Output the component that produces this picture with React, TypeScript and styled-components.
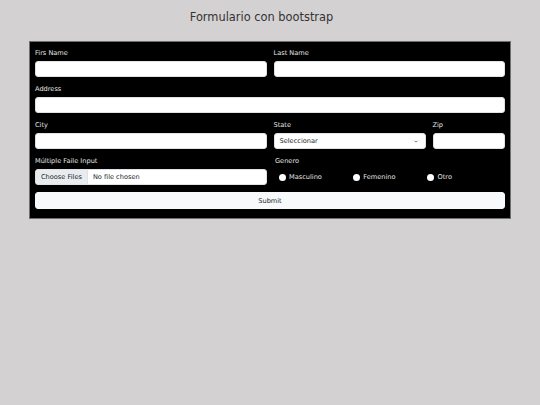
import styled, { createGlobalStyle } from "styled-components";

const GlobalStyle = createGlobalStyle`
    html, body {
        margin: 0;
        padding: 0;
        background-color: #d3d1d2;
        font-family: "DejaVu Sans", "Liberation Sans", sans-serif;
    }
    * {
        box-sizing: border-box;
    }
`;

const StyledPage = styled.div`
    width: 540px;
    height: 405px;
    background-color: #d3d1d2;
`;

const StyledTitle = styled.h1`
    margin: 0;
    height: 41px;
    padding: 9px 17px 0 0;
    font-size: 11.4px;
    line-height: 16px;
    font-weight: normal;
    text-align: center;
    color: #333333;
`;

const StyledForm = styled.form`
    margin: 0 29px;
    padding: 6px 5px 9px 5px;
    background-color: #000000;
    border: 1px solid #6f6f6f;
    display: flex;
    flex-direction: column;
    gap: 7px;
`;

const StyledRow = styled.div`
    display: grid;
    grid-template-columns: repeat(12, 1fr);
    column-gap: 7px;
`;

const StyledField = styled.div<{ $span: number }>`
    grid-column: span ${props => props.$span};
    display: flex;
    flex-direction: column;
    min-width: 0;
`;

const StyledLabel = styled.label<{ $indent?: number }>`
    display: block;
    height: 10px;
    margin-bottom: 3px;
    padding-top: 1px;
    padding-left: ${props => props.$indent ?? 0}px;
    font-size: 6.6px;
    line-height: 9px;
    color: #e6e6e6;
    white-space: nowrap;
`;

const StyledInput = styled.div`
    height: 16px;
    width: 100%;
    background-color: #ffffff;
    border: 1px solid #dee2e6;
    border-radius: 3px;
`;

const StyledSelect = styled(StyledInput)`
    display: flex;
    align-items: center;
    justify-content: space-between;
    padding: 0 7px 0 5px;
    font-size: 6.6px;
    color: #212529;
`;

const StyledFileInput = styled(StyledInput)`
    display: flex;
    align-items: center;
    overflow: hidden;
    font-size: 6.6px;
    color: #212529;
`;

const StyledFileButton = styled.span`
    height: 100%;
    display: flex;
    align-items: center;
    flex-shrink: 0;
    padding: 0 5px;
    background-color: #e9ecef;
    border-right: 1px solid #dee2e6;
    margin-right: 5px;
    white-space: nowrap;
`;

const StyledRadioGroup = styled.div`
    height: 16px;
    display: grid;
    grid-template-columns: repeat(3, 74.3px);
    align-items: center;
    padding-left: 5px;
`;

const StyledRadioItem = styled.div`
    display: flex;
    align-items: center;
    gap: 3.5px;
    font-size: 6.6px;
    color: #e6e6e6;
`;

const StyledRadioDot = styled.span`
    width: 7px;
    height: 7px;
    flex-shrink: 0;
    border-radius: 50%;
    background-color: #ffffff;
`;

const StyledSubmit = styled.button`
    height: 17px;
    width: 100%;
    padding: 0;
    background-color: #f8f9fa;
    border: 1px solid #f8f9fa;
    border-radius: 3px;
    font-family: "DejaVu Sans", "Liberation Sans", sans-serif;
    font-size: 6.6px;
    color: #212529;
`;

const generos = ["Masculino", "Femenino", "Otro"];

export default function App() {
    return (
        <StyledPage>
            <GlobalStyle />
            <StyledTitle>Formulario con bootstrap</StyledTitle>
            <StyledForm onSubmit={e => e.preventDefault()}>
                <StyledRow>
                    <StyledField $span={6}>
                        <StyledLabel>Firs Name</StyledLabel>
                        <StyledInput />
                    </StyledField>
                    <StyledField $span={6}>
                        <StyledLabel>Last Name</StyledLabel>
                        <StyledInput />
                    </StyledField>
                </StyledRow>
                <StyledRow>
                    <StyledField $span={12}>
                        <StyledLabel>Address</StyledLabel>
                        <StyledInput />
                    </StyledField>
                </StyledRow>
                <StyledRow>
                    <StyledField $span={6}>
                        <StyledLabel>City</StyledLabel>
                        <StyledInput />
                    </StyledField>
                    <StyledField $span={4}>
                        <StyledLabel>State</StyledLabel>
                        <StyledSelect>
                            <span>Seleccionar</span>
                            <svg width="4" height="3" viewBox="0 0 4 3">
                                <path d="M0.5 0.7 L2 2.2 L3.5 0.7" fill="none" stroke="#343a40" strokeWidth="0.7" />
                            </svg>
                        </StyledSelect>
                    </StyledField>
                    <StyledField $span={2}>
                        <StyledLabel>Zip</StyledLabel>
                        <StyledInput />
                    </StyledField>
                </StyledRow>
                <StyledRow>
                    <StyledField $span={6}>
                        <StyledLabel>Múltiple Faile Input</StyledLabel>
                        <StyledFileInput>
                            <StyledFileButton>Choose Files</StyledFileButton>
                            <span>No file chosen</span>
                        </StyledFileInput>
                    </StyledField>
                    <StyledField $span={6}>
                        <StyledLabel $indent={1.5}>Genero</StyledLabel>
                        <StyledRadioGroup>
                            {generos.map(item => (
                                <StyledRadioItem key={item}>
                                    <StyledRadioDot />
                                    {item}
                                </StyledRadioItem>
                            ))}
                        </StyledRadioGroup>
                    </StyledField>
                </StyledRow>
                <StyledSubmit type="submit">Submit</StyledSubmit>
            </StyledForm>
        </StyledPage>
    );
}
